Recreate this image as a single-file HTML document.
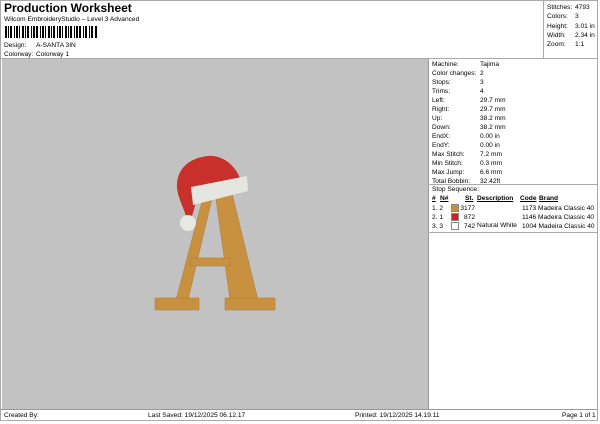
<!DOCTYPE html>
<html><head><style>
body{margin:0;width:600px;height:424px;background:#fff;font-family:"Liberation Sans",sans-serif;position:relative;overflow:hidden;font-size:6.6px;color:#000}
.a{position:absolute;white-space:nowrap}
</style></head><body>
<div class="a" style="left:0;top:0;width:598px;height:421px;border:1px solid #aaa;box-sizing:border-box"></div>
<div class="a" style="left:4px;top:1px;font-size:12px;font-weight:bold">Production Worksheet</div>
<div class="a" style="left:4px;top:16px">Wilcom EmbroideryStudio – Level 3 Advanced</div>
<svg class="a" style="left:5px;top:26px" width="94" height="12">
<g fill="#000">
<rect x="0" width="2" height="12"/><rect x="3" width="1" height="12"/><rect x="5" width="2" height="12"/><rect x="9" width="1" height="12"/><rect x="11" width="2" height="12"/><rect x="14" width="1" height="12"/><rect x="17" width="2" height="12"/><rect x="20" width="1" height="12"/><rect x="22" width="2" height="12"/><rect x="26" width="1" height="12"/><rect x="28" width="2" height="12"/><rect x="31" width="2" height="12"/><rect x="35" width="1" height="12"/><rect x="37" width="2" height="12"/><rect x="40" width="1" height="12"/><rect x="43" width="2" height="12"/><rect x="46" width="1" height="12"/><rect x="48" width="2" height="12"/><rect x="52" width="1" height="12"/><rect x="54" width="2" height="12"/><rect x="57" width="1" height="12"/><rect x="60" width="2" height="12"/><rect x="63" width="1" height="12"/><rect x="65" width="2" height="12"/><rect x="69" width="1" height="12"/><rect x="71" width="2" height="12"/><rect x="74" width="2" height="12"/><rect x="78" width="1" height="12"/><rect x="80" width="2" height="12"/><rect x="84" width="1" height="12"/><rect x="86" width="2" height="12"/><rect x="90" width="2" height="12"/></g></svg>
<div class="a" style="left:4px;top:42px">Design:</div><div class="a" style="left:36px;top:42px">A-SANTA 3IN</div>
<div class="a" style="left:4px;top:51px">Colorway:</div><div class="a" style="left:36px;top:51px">Colorway 1</div>
<div class="a" style="left:543px;top:0;width:1px;height:58px;background:#aaa"></div>
<div class="a" style="left:0;top:58px;width:598px;height:1px;background:#aaa"></div>
<div class="a" style="left:547px;top:3px;line-height:9.3px">Stitches:<br>Colors:<br>Height:<br>Width:<br>Zoom:</div>
<div class="a" style="left:575px;top:3px;line-height:9.3px">4793<br>3<br>3.01 in<br>2.34 in<br>1:1</div>
<div class="a" style="left:2px;top:59px;width:426px;height:350px;background:#c2c2c2;border-right:1px solid #999"></div>
<div class="a" style="left:0;top:409px;width:598px;height:1px;background:#999"></div>
<svg class="a" style="left:0;top:0" width="430" height="410">
<g fill="#c8913f" stroke="#b07a30" stroke-width="0.5">
<polygon points="205,190 214,190 188,300 176,300"/>
<polygon points="214,185 230,185 258,300 230,300"/>
<rect x="190" y="258" width="40" height="8"/>
<rect x="155" y="298" width="44" height="12"/>
<rect x="225" y="298" width="50" height="12"/>
</g>
<path d="M177,188 C176,170 188,158 208,156 C222,155 234,164 240,178 L200,190 C196,198 195,208 192,216 L186,216 C183,206 178,198 177,188 Z" fill="#c8302c"/>
<polygon points="191,187 247,176 248,191 193,205" fill="#e6e6e0"/>
<circle cx="188" cy="223" r="8" fill="#e8e8e2"/>
</svg>
<div class="a" style="left:428px;top:184px;width:170px;height:1px;background:#aaa"></div>
<div class="a" style="left:428px;top:232px;width:170px;height:1px;background:#aaa"></div>
<div class="a" style="left:432px;top:60px;line-height:9px">Machine:<br>Color changes:<br>Stops:<br>Trims:<br>Left:<br>Right:<br>Up:<br>Down:<br>EndX:<br>EndY:<br>Max Stitch:<br>Min Stitch:<br>Max Jump:<br>Total Bobbin:</div>
<div class="a" style="left:480px;top:60px;line-height:9px">Tajima<br>2<br>3<br>4<br>29.7 mm<br>29.7 mm<br>38.2 mm<br>38.2 mm<br>0.00 in<br>0.00 in<br>7.2 mm<br>0.3 mm<br>6.6 mm<br>32.42ft</div>
<div class="a" style="left:432px;top:186px">Stop Sequence:</div>
<div class="a" style="left:432px;top:195px;font-weight:bold;text-decoration:underline">#</div>
<div class="a" style="left:440px;top:195px;font-weight:bold;text-decoration:underline">N#</div>
<div class="a" style="left:465px;top:195px;font-weight:bold;text-decoration:underline">St.</div>
<div class="a" style="left:477px;top:195px;font-weight:bold;text-decoration:underline">Description</div>
<div class="a" style="left:520px;top:195px;font-weight:bold;text-decoration:underline">Code</div>
<div class="a" style="left:539px;top:195px;font-weight:bold;text-decoration:underline">Brand</div>
<div class="a" style="left:432px;top:204px;line-height:9px">1. 2<br>2. 1<br>3. 3</div>
<div class="a" style="left:451px;top:204px;width:6px;height:6px;background:#c8913f;border:1px solid #888"></div>
<div class="a" style="left:451px;top:213px;width:6px;height:6px;background:#d02020;border:1px solid #888"></div>
<div class="a" style="left:451px;top:222px;width:6px;height:6px;background:#fff;border:1px solid #888"></div>
<div class="a" style="left:457px;top:204px;line-height:9px;width:18px;text-align:right">3177<br>872<br>742</div>
<div class="a" style="left:477px;top:222px">Natural White</div>
<div class="a" style="left:522px;top:204px;line-height:9px">1173 Madeira Classic 40<br>1146 Madeira Classic 40<br>1004 Madeira Classic 40</div>
<div class="a" style="left:4px;top:412px">Created By:</div>
<div class="a" style="left:148px;top:412px">Last Saved: 19/12/2025 06.12.17</div>
<div class="a" style="left:355px;top:412px">Printed: 19/12/2025 14.19.11</div>
<div class="a" style="left:562px;top:412px">Page 1 of 1</div>
</body></html>
